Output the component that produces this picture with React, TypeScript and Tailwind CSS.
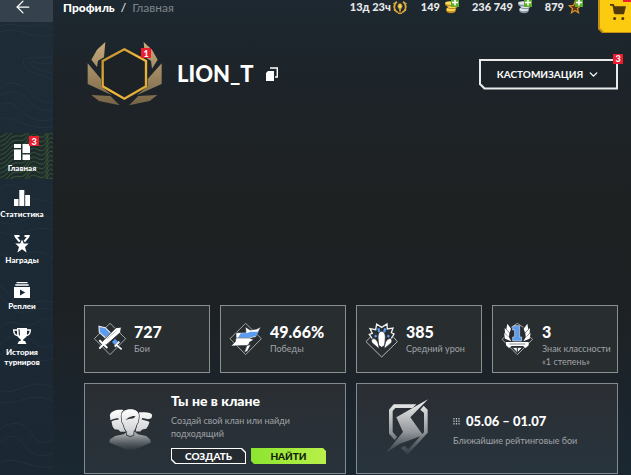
import type { ReactNode } from 'react';
import { ArrowLeft, ChevronDown } from 'lucide-react';

function GridIcon() {
  return (
    <svg viewBox="0 0 16 16" className="size-4" fill="#fff">
      <path d="M0 0h7v4H0zM0 5.500h7V16H0zM8.500 0H16v9H8.500zM8.500 10.500H16V16H8.500z" />
    </svg>
  );
}

function StatsIcon() {
  return (
    <svg viewBox="0 0 16 16" className="size-4" fill="#fff">
      <path d="M0 9h4.500v7H0zM5.300 0h5v16h-5zM11.200 5H16v11h-4.800z" />
    </svg>
  );
}

function AwardIcon() {
  return (
    <svg viewBox="0 0 16 18" className="h-[18px] w-4" fill="#fff">
      <path d="M0 0h5.500v2H3.300l3.200 4-1.600 1.200L1 2.500zM16 0h-5.500v2h2.200L9.500 6l1.600 1.200L15 2.500z" />
      <path d="M8 4.500l1.700 3.900 5 .2-3.700 3.300 1.600 5.600L8 14.300l-4.600 3.200L5 11.900 1.300 8.600l5-.2z" />
    </svg>
  );
}

function ReplayIcon() {
  return (
    <svg viewBox="0 0 16 16" className="size-4" fill="#fff">
      <path d="M2.500 0h11v1.300h-11zM1.300 2.300h13.400v1.500H1.300z" />
      <path fillRule="evenodd" d="M0 5h16v11H0zM6 7.500v6l5.200-3z" />
    </svg>
  );
}

function CupIcon() {
  return (
    <svg viewBox="0 0 18 16" className="h-4 w-[18px]" fill="#fff">
      <path fillRule="evenodd" d="M4 0h10v1.300h4c0 4.500-1.500 6.400-4.700 7.200C12.400 10 11 11 10.300 11.300V13H12l1.500 3h-9L6 13h1.700v-1.700C7 11 5.600 10 4.700 8.500 1.500 7.700 0 5.800 0 1.300h4zM1.400 2.700C1.600 5 2.400 6.300 4.100 6.900L4 2.700zM16.600 2.700H14l-.1 4.200c1.700-.6 2.500-1.900 2.700-4.200zM5.500 1.300l.3 5.200 1.200 1.700-.4-6.900z" />
    </svg>
  );
}

const nav = [
  { title: 'Главная', icon: GridIcon, active: true, count: 3 },
  { title: 'Статистика', icon: StatsIcon },
  { title: 'Награды', icon: AwardIcon },
  { title: 'Реплеи', icon: ReplayIcon },
  { title: 'История турниров', icon: CupIcon },
];

function Badge({ children }: { children: ReactNode }) {
  return (
    <span className="flex size-2.5 items-center justify-center bg-[#ed1c2e] text-[9px] leading-none font-black text-white">
      {children}
    </span>
  );
}

function Contours() {
  return (
    <svg viewBox="0 0 53 475" preserveAspectRatio="xMidYMin slice" className="absolute inset-0 size-full" fill="none" stroke="#3a4c58" strokeOpacity=".35" strokeWidth=".7">
      <path d="M0 26c12-5 25 3 36-1 8-3 11 1 17 4M0 32c18-7 30 8 53 3M53 62c-12 6-25-5-22 2 3 8 15 6 22 10M53 56c-16 4-33-2-29 9 4 10 20 9 29 15M0 88c12-10 24-3 31 5 8 9 14 10 22 9M0 96c10-7 20-4 27 4 9 9 17 12 26 10M0 105c12-6 18 3 26 10 8 6 18 7 27 4M0 119c15-5 24 12 53 8" />
      <path d="M0 190c8-10 21-3 28 5s14 2 25 9M0 222c17 8 30-12 53-4M0 232c15 8 34-9 53-2M0 253c9 8 17 7 26 2 9-6 17-3 27 3M0 286c8 2 9 15 19 18 12 4 19-8 34-1M0 296c7 3 11 15 20 16 11 2 19-7 33-2" />
      <path d="M0 327c13-10 22 0 30-2 9-2 14-9 23-6M0 345c14-18 30-7 36-1 6 5 11 3 17 1M0 356c12-16 26-8 34 0 7 6 13 5 19 3M0 390c15 8 31-15 53-2M0 402c18 5 29-12 53-1M0 430c10-11 27-7 32 4 4 9 13 10 21 6M0 442c12-10 20-5 25 4 5 8 16 13 28 7M0 463c16-9 30 7 53 4" />
    </svg>
  );
}

function Waves() {
  const rows = Array.from({ length: 20 }, (_, i) => i * 4.5 - 22);
  return (
    <svg viewBox="0 0 53 46" preserveAspectRatio="none" className="absolute inset-0 size-full" fill="none" stroke="#4b6b3e" strokeOpacity=".55" strokeWidth="1.1">
      {rows.map((y) => (
        <path key={y} d={`M0 ${y + 26}q5-1 9-6t10-4 9-6 10-3 9-6 8-3`} />
      ))}
    </svg>
  );
}

function Emblem() {
  return (
    <svg viewBox="262 123 228 198" className="h-[66px] w-[76px]">
      <defs>
        <linearGradient id="wing" x1="0" y1="0" x2="0" y2="1">
          <stop offset="0" stopColor="#c9ab7c" />
          <stop offset="1" stopColor="#746346" />
        </linearGradient>
        <linearGradient id="hex" x1="0" y1="0" x2="1" y2="1">
          <stop offset="0" stopColor="#b98b2c" />
          <stop offset=".5" stopColor="#f5bb3a" />
          <stop offset="1" stopColor="#d9a637" />
        </linearGradient>
      </defs>
      <g fill="url(#wing)">
        <path d="M317 126l-4 46-18 10-3 19-17-22 17-30zM264 190l40 47v22l33 27-73-34zM275 285l57 3 28 28-62-13z" />
        <path d="M432 126l4 46 18 10 3 24 17-27-17-30zM486 190l-42 47v22l-33 27 75-34zM473 285l-57 3-28 28 62-13z" />
      </g>
      <path d="M374 148l65 35v76l-65 37-65-37v-76z" fill="#1c2226" stroke="url(#hex)" strokeWidth="7" />
    </svg>
  );
}

function LaurelIcon() {
  return (
    <svg viewBox="0 0 14 13" className="h-[13px] w-3.5" fill="none" stroke="#d9a637" strokeWidth="1.700">
      <path d="M4 .8C.5 3 .2 9.500 5 11.500M10 .8c3.500 2.200 3.800 8.700-1 10.700M.6 2l1.800 2M.2 5.500l2 1M.8 9.200l2-.4M13.400 2l-1.800 2M13.800 5.500l-2 1M13.200 9.200l-2-.4M5 12.300h4" />
      <ellipse cx="7" cy="5.200" rx="2.200" ry="2.800" fill="#f3cf5a" stroke="#8d6417" strokeWidth=".6" />
      <path d="M7 8v2.500" />
    </svg>
  );
}

function Coins({ light, dark }: { light: string; dark: string }) {
  return (
    <svg viewBox="0 0 12 12" className="size-3.5">
      <path d="M2 7.500v2c0 1 1.500 1.800 4 1.800s4-.8 4-1.800v-2z" fill={dark} />
      <ellipse cx="6" cy="8" rx="4" ry="1.600" fill={light} />
      <path d="M3 5v1.500C3 7.300 4.500 8 7 8s4-.7 4-1.500V5z" fill={dark} />
      <ellipse cx="7" cy="5.400" rx="4" ry="1.500" fill={light} />
      <path d="M1 2.500V4c0 .8 1.500 1.500 4 1.500S9 4.800 9 4V2.500z" fill={dark} />
      <ellipse cx="5" cy="2.600" rx="4" ry="1.500" fill={light} />
    </svg>
  );
}

function StarIcon() {
  return (
    <svg viewBox="0 0 12 12" className="size-3.5">
      <path d="M6 1.500l1.300 3.200 3.600.2-2.800 2.400.9 3.600-3-1.900-3 1.900.9-3.600-2.800-2.400 3.600-.2z" fill="#5a3510" stroke="#dc8f2b" strokeWidth="1.100" />
    </svg>
  );
}

function CartIcon() {
  return (
    <svg viewBox="0 0 16 17" className="h-[17px] w-4" fill="#4d3a08">
      <path d="M0 0h3.700l1 2.200H16l-2 8H5.200l-1.300-1L2.600 1.700H0z" />
      <circle cx="4.600" cy="14.500" r="1.500" />
      <circle cx="12.800" cy="14.500" r="1.500" />
    </svg>
  );
}

function BattlesIcon() {
  return (
    <svg viewBox="37 82 102 102" className="size-[34px]">
      <path d="M88 86l47 46-47 48-47-48z" fill="none" stroke="#a4a7a9" strokeWidth="3" />
      <path d="M55 95l19 4 17 17-17 14-18-17z" fill="#5b9cf0" stroke="#e4e6e8" strokeWidth="3.500" />
      <path d="M94 142l9-10 9 9-9 11z" fill="#5b9cf0" />
      <path d="M116 141l-14 15M106 150l17 14" stroke="#fff" strokeWidth="5" />
      <path d="M122 97l-2 16-42 37-9 3-6-6 3-8 40-40z" fill="#fff" stroke="#282d30" strokeWidth="3" />
      <path d="M78 133l30-25" stroke="#9ca1a5" strokeWidth="2" />
      <path d="M56 137l24 23M68 149l-12 13" stroke="#fff" strokeWidth="6" />
    </svg>
  );
}

function WinsIcon() {
  return (
    <svg viewBox="41 82 102 102" className="size-[34px]">
      <path d="M91 86l47 46-47 48-47-48z" fill="none" stroke="#a4a7a9" strokeWidth="3" />
      <path d="M62 114l30-1-2-17 14 10 20-3 13-7-7 14-8 17-22 5H62z" fill="#fff" stroke="#282d30" strokeWidth="2" />
      <path d="M76 116l18-1 12-4h24l-8 13-22 5H68z" fill="#5b9cf0" />
      <path d="M62 130h40l13 5-12 7-4 10-52 2 13-13zM95 152l11-2-10 20-9 3z" fill="#fff" stroke="#282d30" strokeWidth="1.500" />
    </svg>
  );
}

function DamageIcon() {
  return (
    <svg viewBox="45 75 102 108" className="h-9 w-[34px]">
      <path d="M60 121l-12 13 47 46 47-46-11-13" fill="none" stroke="#b4b7b9" strokeWidth="3" />
      <path d="M66 124l-8-12 9-3-7-14 17 3 3-17 15 10 16-10 1 15 17-3-5 14 8 4-8 13" fill="#272d31" stroke="#f1f1f1" strokeWidth="4" />
      <path d="M75 115l4 5M85 94l3 12M106 94l-4 12M117 115l-4 5" fill="none" stroke="#5b9cf0" strokeWidth="7" />
      <path d="M84 121c0-12 5-18 11-18s11 6 11 18l-2 24-9 6-9-6zM69 124c11 2 17 12 18 31l-21-18c-3-6-1-10 3-13zM121 124c-11 2-17 12-18 31l21-18c3-6 1-10-3-13z" fill="#fff" stroke="#282d30" strokeWidth="2" />
    </svg>
  );
}

function MasteryIcon() {
  return (
    <svg viewBox="49 82 102 102" className="size-[34px]">
      <path d="M80 98l18-12 18 12M60 127l-8 7 46 46 46-46-8-7" fill="none" stroke="#a4a7a9" strokeWidth="3" />
      <path d="M68 87l11 15-4 12-10-10zM60 100l14 15-1 12-12-11zM58 115l15 13 7 12-19-8zM128 87l-11 15 4 12 10-10zM136 100l-14 15 1 12 12-11zM138 115l-15 13-7 12 19-8z" fill="#fff" />
      <path d="M87 93h18v34h6v12H84v-12h6v-21h-6v-8z" fill="#5b9cf0" stroke="#d7d9db" strokeWidth="2" />
      <path d="M64 142h68v10l-9 8-8-6H81l-8 6-9-8z" fill="#fff" />
      <path d="M74 148h48" stroke="#4a5055" strokeWidth="2" />
      <path d="M82 158l32 0-16 17zM98 156v22" fill="#f3f3f3" stroke="#30363a" strokeWidth="3" />
    </svg>
  );
}

function ClanIcon() {
  return (
    <svg viewBox="83 94 132 130" className="h-[43px] w-11">
      <defs>
        <linearGradient id="clan" x1="0" y1="94" x2="0" y2="222" gradientUnits="userSpaceOnUse">
          <stop offset="0" stopColor="#fff" />
          <stop offset=".5" stopColor="#d3d5d7" />
          <stop offset="1" stopColor="#82878b" stopOpacity="0" />
        </linearGradient>
      </defs>
      <g fill="url(#clan)">
        <path d="M126 97c-22-2-38 4-41 16l2 15 9-4 14-3 2 5-14 2-8 4 3 14 6 9 12 2 6 6h16z" />
        <path d="M174 104c20-1 37 0 39 9l-2 8-9 4-19-4-2 5 17 4 7 3-4 12-6 9-12 2-6 6h-14z" />
        <path d="M85 186l16-10 26-6 12-8h20l11 8 25 6 12 10 2 9-16 8-45 19-47-19-17-8z" />
      </g>
      <path
        d="M148 95c15 0 25 7 25 20l-2 18-6 10-3 11-5 8v10l-10 5-11-5v-10l-6-8-3-11-5-10-2-18c0-13 11-20 28-20z"
        fill="url(#clan)"
        stroke="#2a3036"
        strokeWidth="4"
        paintOrder="stroke"
      />
      <path d="M132 127l10-7 13-5 8 1-6 6-15 2z" fill="#2a3036" />
    </svg>
  );
}

function RatingIcon() {
  return (
    <svg viewBox="103 62 130 168" className="h-14 w-11">
      <defs>
        <linearGradient id="rating" x1="0" y1="62" x2="0" y2="228" gradientUnits="userSpaceOnUse">
          <stop offset="0" stopColor="#f5f5f5" />
          <stop offset=".6" stopColor="#92969a" />
          <stop offset="1" stopColor="#70777d" stopOpacity=".15" />
        </linearGradient>
      </defs>
      <g fill="url(#rating)">
        <path d="M231 63l-53 54 38 54-69 25-42 27 51-62-20-44 50-29z" />
        <path d="M196 78h-68l-14 16v72l17 19 7-9-13-15V98l8-9h52zM218 82l-10 12 11 10v58l-47 51-12-10-11 6 21 20 60-66V94z" />
      </g>
    </svg>
  );
}

const stats = [
  { value: '727', label: 'Бои', icon: BattlesIcon },
  { value: '49.66%', label: 'Победы', icon: WinsIcon },
  { value: '385', label: 'Средний урон', icon: DamageIcon },
  { value: '3', label: 'Знак классности «1 степень»', icon: MasteryIcon },
];

const wallet = [
  { name: 'gold', value: '149', icon: <Coins light="#ffd95a" dark="#c58a1c" /> },
  { name: 'silver', value: '236 749', icon: <Coins light="#dfe8ec" dark="#8596a0" /> },
  { name: 'stars', value: '879', icon: <StarIcon /> },
];

export default function App() {
  return (
    <div className="flex min-h-screen bg-[linear-gradient(180deg,#1d2830_0%,#1d2328_20%,#1e2122_42%,#1d2123_65%,#1b252e_88%,#1a2832_100%)] font-['Lato','Open_Sans',sans-serif] text-white">
      <aside className="relative w-[53px] shrink-0 overflow-hidden bg-[linear-gradient(180deg,#1d2c37,#1b2833)]">
        <Contours />
        <div className="relative flex h-[22px] bg-[#35414c] pr-2">
          <button type="button" aria-label="Назад" className="flex h-3.5 w-full items-center justify-center">
            <ArrowLeft size={20} strokeWidth={1.500} />
          </button>
        </div>
        <nav className="relative mt-[111px] flex flex-col">
          {nav.map((item) => (
            <a
              key={item.title}
              href="#"
              className={`relative flex min-h-[46px] flex-col items-center pt-2.5 pr-[9px] text-center text-[8px] leading-[10px] font-black ${item.active ? 'bg-[#1d2b2c]' : ''}`}
            >
              {item.active && <Waves />}
              <span className="relative flex h-[18px] items-center">
                <item.icon />
                {item.count && (
                  <span className="absolute -top-[7px] -right-[9px]">
                    <Badge>{item.count}</Badge>
                  </span>
                )}
              </span>
              <span className="relative mt-0.5">{item.title}</span>
            </a>
          ))}
        </nav>
      </aside>

      <div className="flex min-w-0 flex-1 flex-col">
        <header className="flex items-start justify-between pl-2.5">
          <div className="flex gap-1.5 text-xs leading-4">
            <a href="#" className="font-black">Профиль</a>
            <span>/</span>
            <span className="text-[#7d858b]">Главная</span>
          </div>
          <div className="flex items-start gap-3.5 text-[11px] leading-3.5 font-black text-[#e8e9ea]">
            <div className="flex items-center gap-0.5">
              13д 23ч <LaurelIcon />
            </div>
            {wallet.map((item) => (
              <div key={item.name} className="flex items-center gap-1">
                {item.value}
                <button type="button" aria-label={`Пополнить ${item.name}`} className="relative">
                  {item.icon}
                  <svg viewBox="0 0 8 8" className="absolute -top-px -right-px size-2">
                    <path d="M0 0h8v8H0z" fill="#5fae2b" />
                    <path d="M4 .5v6M1 3.500h6" stroke="#fff" strokeWidth="1.600" />
                  </svg>
                </button>
              </div>
            ))}
            <button
              type="button"
              aria-label="Магазин"
              className="relative ml-0.5 flex h-[33px] w-[33px] items-start bg-[#c48f13] pt-1 pl-3 [clip-path:polygon(0_0,100%_0,100%_100%,4px_100%,0_29px)]"
            >
              <span className="absolute inset-0 bottom-px left-0.5 bg-[#fccb10] [clip-path:polygon(0_0,100%_0,100%_100%,4px_100%,0_28px)]" />
              <span className="relative"><CartIcon /></span>
              <span className="absolute top-0 right-0 h-0.5 w-2 bg-[#ed1c2e]" />
            </button>
          </div>
        </header>

        <main className="flex flex-1 flex-col pr-[13px] pb-px pl-[31px]">
          <section className="mt-2 flex items-center">
            <div className="relative ml-[3px]">
              <Emblem />
              <span className="absolute top-[7px] right-3">
                <Badge>1</Badge>
              </span>
            </div>
            <h1 className="ml-3.5 text-[22px] leading-7 font-black">LION_T</h1>
            <button type="button" aria-label="Скопировать" className="ml-3">
              <svg viewBox="0 0 12 14" className="h-3.5 w-3">
                <path d="M4 1h7.300v9H9" fill="none" stroke="#fff" strokeWidth="1.400" />
                <path d="M2 4h6v10H0V6z" fill="#fff" />
              </svg>
            </button>
            <div className="relative ml-auto">
              <button type="button" className="block bg-[#e9eaea] p-0.5 [clip-path:polygon(0_0,100%_0,100%_100%,5px_100%,0_calc(100%-5px))]">
                <span className="flex h-[27px] w-[135px] items-center justify-center gap-1 bg-[#1d2429] text-[10px] font-bold [clip-path:polygon(0_0,100%_0,100%_100%,4px_100%,0_calc(100%-4px))]">
                  КАСТОМИЗАЦИЯ <ChevronDown size={13} strokeWidth={2.500} />
                </span>
              </button>
              <span className="absolute -top-[5px] -right-[5px]">
                <Badge>3</Badge>
              </span>
            </div>
          </section>

          <section className="mt-auto grid grid-cols-4 gap-2.5 pt-10">
            {stats.map((stat) => (
              <div key={stat.label} className="flex min-h-[68px] border border-[#8b8f91] bg-[#282d30] pt-4 pl-2">
                <span className="w-[34px] shrink-0"><stat.icon /></span>
                <div className="ml-[7px]">
                  <div className="text-base leading-5 font-black">{stat.value}</div>
                  <div className="text-[9px] leading-[13px] text-[#a0a4a7]">{stat.label}</div>
                </div>
              </div>
            ))}
          </section>

          <section className="mt-2.5 grid grid-cols-2 gap-2.5">
            <div className="flex min-h-[91px] border border-[#858a8e] bg-[linear-gradient(180deg,#2a2e33,#28323a)] pl-6">
              <span className="mt-[25px] shrink-0"><ClanIcon /></span>
              <div className="ml-[18px] pt-2">
                <h2 className="text-sm leading-[18px] font-black">Ты не в клане</h2>
                <p className="mt-1 w-[130px] text-[9px] leading-[13px] text-[#a0a4a7]">Создай свой клан или найди подходящий</p>
                <div className="mt-2 flex gap-[5px] text-[10px] leading-3 font-black">
                  <button type="button" className="bg-white p-px [clip-path:polygon(0_0,calc(100%-4px)_0,100%_4px,100%_100%,4px_100%,0_calc(100%-4px))]">
                    <span className="block w-[73px] bg-[#242b31] py-px [clip-path:polygon(0_0,calc(100%-4px)_0,100%_4px,100%_100%,4px_100%,0_calc(100%-4px))]">СОЗДАТЬ</span>
                  </button>
                  <button type="button" className="w-[75px] bg-[linear-gradient(90deg,#8be52f,#b9f04a)] py-0.5 text-[#14200c] [clip-path:polygon(0_0,calc(100%-3px)_0,100%_3px,100%_100%,3px_100%,0_calc(100%-3px))]">
                    НАЙТИ
                  </button>
                </div>
              </div>
            </div>

            <div className="flex min-h-[91px] border border-[#858a8e] bg-[linear-gradient(180deg,#2b2e33,#28343d)] pl-7">
              <span className="mt-[15px] shrink-0"><RatingIcon /></span>
              <div className="ml-6 pt-7">
                <div className="flex items-center gap-1.5 text-[13px] leading-[18px] font-black">
                  <svg viewBox="0 0 7 7" className="size-[7px]" stroke="#c3c6c8" strokeWidth="1.200" strokeDasharray="1.500 1">
                    <path d="M1 0v7M3.500 0v7M6 0v7" />
                  </svg>
                  05.06 – 01.07
                </div>
                <p className="mt-1 text-[9px] leading-[13px] text-[#a0a4a7]">Ближайшие рейтинговые бои</p>
              </div>
            </div>
          </section>
        </main>
      </div>
    </div>
  );
}
